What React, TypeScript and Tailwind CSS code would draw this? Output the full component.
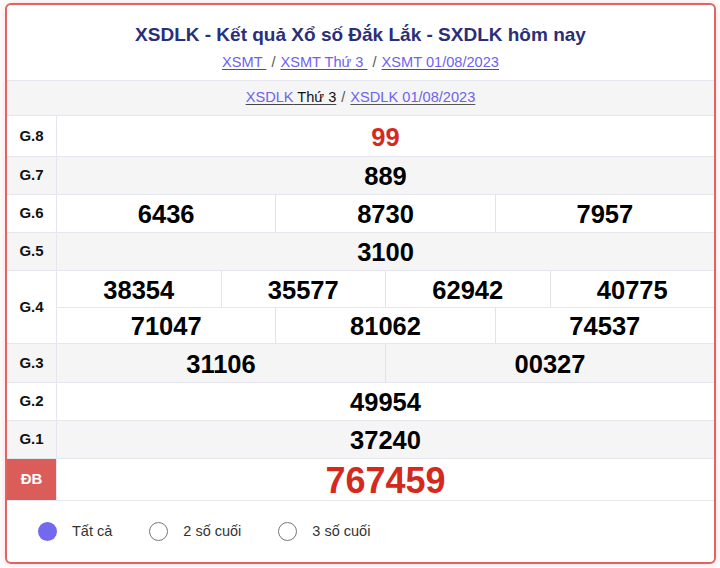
import React from "react";

const font = { fontFamily: '"Liberation Sans", Arial, Helvetica, sans-serif' };

function Row({
  label,
  rows,
  bg,
  h = "h-[37px]",
  special = false,
  numClass = "text-[25.5px] text-black",
}: {
  label: string;
  rows: string[][];
  bg: string;
  h?: string;
  special?: boolean;
  numClass?: string;
}) {
  return (
    <div className={`flex border-b border-[#e6e6ee] ${bg}`}>
      <div
        className={`w-[50px] shrink-0 border-r border-[#e6e6ee] flex items-center justify-center font-bold ${
          special ? "bg-[#da5d5a] text-white text-[15px]" : "text-[15px] text-[#111]"
        }`}
      >
        {label}
      </div>
      <div className="flex-1 flex flex-col">
        {rows.map((r, i) => (
          <div
            key={i}
            className={`flex ${h} ${i > 0 ? "border-t border-[#e6e6ee]" : ""}`}
          >
            {r.map((n, j) => (
              <div
                key={j}
                className={`flex-1 basis-0 flex items-center justify-center pt-[3px] font-bold leading-none ${numClass} ${
                  j > 0 ? "border-l border-[#e2e2e8]" : ""
                }`}
              >
                {n}
              </div>
            ))}
          </div>
        ))}
      </div>
    </div>
  );
}

export default function App() {
  return (
    <div className="w-[720px] h-[568px] bg-white pl-[5px] pt-[3px]" style={font}>
      <div className="w-[711px] h-[561px] border-2 border-[#e06464] rounded-[6px] shadow-[0_0_8px_rgba(224,100,100,0.25)] overflow-hidden flex flex-col bg-white">
        <div className="h-[76px] border-b border-[#e6e6ee] flex flex-col items-center">
          <h1 className="mt-[18px] text-[19px] font-bold text-[#2b2f78] leading-6">
            XSDLK - Kết quả Xổ số Đắk Lắk - SXDLK hôm nay
          </h1>
          <div className="mt-[5px] text-[14.6px] text-[#555] leading-5">
            <a className="text-[#6e62ee] underline decoration-[#555] underline-offset-2">XSMT </a>
            <span className="mx-[5px]">/</span>
            <a className="text-[#6e62ee] underline decoration-[#555] underline-offset-2">XSMT Thứ 3 </a>
            <span className="mx-[5px]">/</span>
            <a className="text-[#6e62ee] underline decoration-[#555] underline-offset-2">XSMT 01/08/2023</a>
          </div>
        </div>
        <div className="h-[35px] bg-[#f5f5f5] border-b border-[#e6e6ee] flex items-center justify-center text-[14.6px] text-[#555]">
          <a className="underline decoration-[#444] underline-offset-2">
            <span className="text-[#6e62ee]">XSDLK</span>
            <span className="text-[#111]"> Thứ 3 </span>
          </a>
          <span className="mx-[5px]">/</span>
          <a className="text-[#6e62ee] underline decoration-[#555] underline-offset-2">XSDLK 01/08/2023</a>
        </div>
        <Row label="G.8" rows={[["99"]]} bg="bg-white" h="h-[40px]" numClass="text-[25.5px] text-[#d42a1e]" />
        <Row label="G.7" rows={[["889"]]} bg="bg-[#f5f5f5]" />
        <Row label="G.6" rows={[["6436", "8730", "7957"]]} bg="bg-white" />
        <Row label="G.5" rows={[["3100"]]} bg="bg-[#f5f5f5]" />
        <Row
          label="G.4"
          rows={[
            ["38354", "35577", "62942", "40775"],
            ["71047", "81062", "74537"],
          ]}
          bg="bg-white"
          h="h-[36px]"
        />
        <Row label="G.3" rows={[["31106", "00327"]]} bg="bg-[#f5f5f5]" h="h-[38px]" />
        <Row label="G.2" rows={[["49954"]]} bg="bg-white" />
        <Row label="G.1" rows={[["37240"]]} bg="bg-[#f5f5f5]" />
        <Row
          label="ĐB"
          rows={[["767459"]]}
          bg="bg-white"
          h="h-[41px]"
          special
          numClass="text-[36px] text-[#d42a1e]"
        />
        <div className="flex-1 flex items-center pl-[31px] text-[14.5px] text-[#333]">
          <label className="flex items-center">
            <span className="w-[19px] h-[19px] rounded-full bg-[#7368ee]" />
            <span className="ml-[15px]">Tất cả</span>
          </label>
          <label className="flex items-center ml-[37px]">
            <span className="w-[19px] h-[19px] rounded-full border border-[#777] bg-white" />
            <span className="ml-[15px]">2 số cuối</span>
          </label>
          <label className="flex items-center ml-[37px]">
            <span className="w-[19px] h-[19px] rounded-full border border-[#777] bg-white" />
            <span className="ml-[15px]">3 số cuối</span>
          </label>
        </div>
      </div>
    </div>
  );
}
